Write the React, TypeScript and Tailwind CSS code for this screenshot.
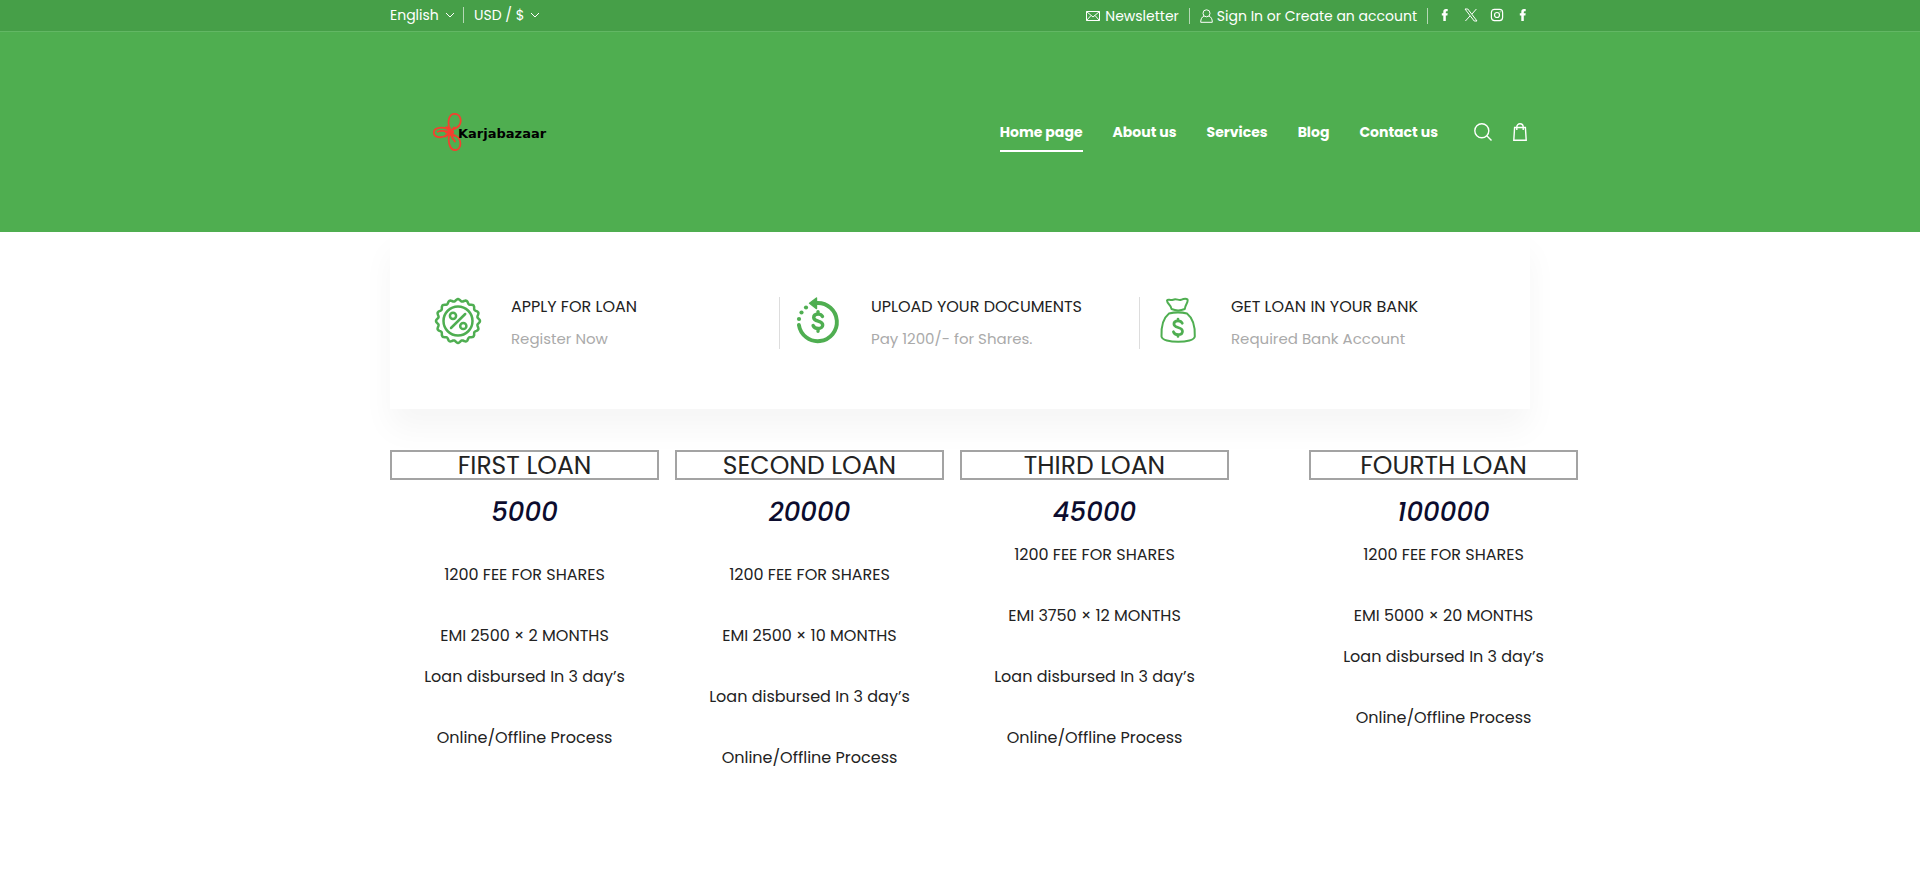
import React from "react";

const socials = ["Facebook", "X", "Instagram", "Facebook page"];

const navLinks = ["Home page", "About us", "Services", "Blog", "Contact us"];

const loans = [
  {
    name: "FIRST LOAN",
    amount: "5000",
    column: "",
    lines: [
      { text: "1200 FEE FOR SHARES", space: "mt-10" },
      { text: "EMI 2500 × 2 MONTHS", space: "mt-10" },
      { text: "Loan disbursed In 3 day’s", space: "mt-5" },
      { text: "Online/Offline Process", space: "mt-10" },
    ],
  },
  {
    name: "SECOND LOAN",
    amount: "20000",
    column: "",
    lines: [
      { text: "1200 FEE FOR SHARES", space: "mt-10" },
      { text: "EMI 2500 × 10 MONTHS", space: "mt-10" },
      { text: "Loan disbursed In 3 day’s", space: "mt-10" },
      { text: "Online/Offline Process", space: "mt-10" },
    ],
  },
  {
    name: "THIRD LOAN",
    amount: "45000",
    column: "",
    lines: [
      { text: "1200 FEE FOR SHARES", space: "mt-5" },
      { text: "EMI 3750 × 12 MONTHS", space: "mt-10" },
      { text: "Loan disbursed In 3 day’s", space: "mt-10" },
      { text: "Online/Offline Process", space: "mt-10" },
    ],
  },
  {
    name: "FOURTH LOAN",
    amount: "100000",
    column: "ml-16",
    lines: [
      { text: "1200 FEE FOR SHARES", space: "mt-5" },
      { text: "EMI 5000 × 20 MONTHS", space: "mt-10" },
      { text: "Loan disbursed In 3 day’s", space: "mt-5" },
      { text: "Online/Offline Process", space: "mt-10" },
    ],
  },
];

function Chevron() {
  return (
    <svg viewBox="0 0 10 6" className="pointer-events-none h-[6px] w-[10px]" fill="none" stroke="currentColor" strokeWidth="1" aria-hidden="true">
      <path d="M1 1l4 4 4-4" />
    </svg>
  );
}

function SocialIcon({ name }: { name: string }) {
  if (name === "X") {
    return (
      <svg viewBox="0 0 14 14" className="h-[14px] w-[14px]" fill="none" stroke="currentColor" aria-hidden="true">
        <path d="M1 1h2.8l9.2 12h-2.8zM12.4 1L7.9 6.1M6 8L1.4 13" />
      </svg>
    );
  }
  if (name === "Instagram") {
    return (
      <svg viewBox="0 0 14 14" className="h-[14px] w-[14px]" fill="none" stroke="currentColor" strokeWidth="1.2" aria-hidden="true">
        <rect x="1.4" y="1.4" width="11.2" height="11.2" rx="3" />
        <circle cx="7" cy="7" r="2.5" />
        <circle cx="10.1" cy="3.9" r=".3" strokeWidth=".6" />
      </svg>
    );
  }
  return (
    <svg viewBox="0 0 14 14" className="h-[14px] w-[14px]" fill="currentColor" aria-hidden="true">
      <path d="M5.3 13V7.6H3.8V5.2h1.5V3.7C5.3 2 6.3 1 7.9 1h1.8v2.2H8.6c-.6 0-.8.3-.8.8v1.2h1.9l-.3 2.400H7.8V13z" />
    </svg>
  );
}

function Flower() {
  return (
    <svg viewBox="0 0 30 40" className="h-10 w-[30px] shrink-0" fill="none" stroke="#f5402f" strokeWidth="1.8" aria-hidden="true">
      <path d="M17.500 17C15.500 10 16.500 1.800 22.500 1.800c6 0 7.500 7 5 11.200-1.600 2.600-4 3.800-8 5" />
      <path d="M17 17.500C11 14.500 1.800 15 1.800 20.500c0 5.500 8.200 6.300 14.700 1.800M5 20c3-1.500 7-1.500 11 0" />
      <path d="M17.500 22c-2 7 0 16 5.500 16 5 0 6.500-6 4.500-10.500-1.300-2.700-4-4.200-8-5.500M19 23c1 3 2.500 5 4.500 7" />
      <path d="M14 14.500l4 5.500 5-5M13 25l5-5 4.500 4.500M13 20h9M17.500 15v9" strokeWidth="2.400" />
    </svg>
  );
}

function PercentBadge() {
  const points = Array.from({ length: 128 }, (_, i) => {
    const a = (i / 128) * Math.PI * 2;
    const r = 20.9 + 1.1 * Math.cos(a * 16);
    return `${24 + r * Math.sin(a)},${24 - r * Math.cos(a)}`;
  }).join(" ");
  return (
    <svg viewBox="0 0 48 48" className="h-12 w-12" fill="none" stroke="#4fae51" strokeWidth="2.500" aria-hidden="true">
      <polygon points={points} strokeLinejoin="round" />
      <circle cx="24" cy="24" r="14.500" />
      <circle cx="19" cy="18.800" r="3.100" />
      <circle cx="29.300" cy="29" r="3.100" />
      <path d="M31.200 17L17 31" strokeLinecap="round" />
    </svg>
  );
}

function DollarCycle() {
  return (
    <svg viewBox="0 0 48 48" className="h-12 w-12" fill="none" stroke="#4fae51" aria-hidden="true">
      <path d="M23 6A19.100 19.100 0 1 1 4.900 28" strokeWidth="3.900" strokeLinecap="round" />
      <path d="M15.500 6.300L22.500 1v10.600z" fill="#4fae51" strokeWidth="1.400" strokeLinejoin="round" />
      <g fill="#4fae51" stroke="none">
        <circle cx="12" cy="10.500" r="2.100" />
        <circle cx="7.500" cy="15.500" r="2.100" />
        <circle cx="5" cy="22" r="2.100" />
      </g>
      <path d="M28.500 19.500c-.8-1.700-2.300-2.400-4.500-2.400-2.600 0-4.300 1.200-4.300 3.300 0 4.900 9 2.500 9 7.500 0 2.200-1.900 3.600-4.600 3.600-2.500 0-4.200-1-5-3M24 14.600v2.500M24 31.500v2.700" strokeWidth="3.400" strokeLinecap="round" />
    </svg>
  );
}

function MoneyBag() {
  return (
    <svg viewBox="0 0 48 48" className="h-12 w-12" fill="none" stroke="#4fae51" strokeWidth="2" strokeLinecap="round" strokeLinejoin="round" aria-hidden="true">
      <path d="M17.500 12c0-4-4.500-5-4.500-8.500 1-2 3 .3 6-.7 3-1.800 5.500.9 8 0 2.500-1.100 5-2 6.500-.3 1 3-2.200 4.500-2.700 9.500-4 1.700-9.300 1.700-13.300 0z" />
      <path d="M15 16.500c6-1.500 12-1.500 18 0 5 4 8.300 12 7.800 23-.7 7-32.600 7-33.300 0C7 28.500 10 20.500 15 16.500z" />
      <path d="M28.300 26.300c-.7-1.800-2.200-2.500-4.300-2.500-2.500 0-4.100 1.200-4.100 3.200 0 4.600 8.600 2.300 8.600 7.200 0 2.200-1.800 3.500-4.400 3.500-2.400 0-4-1-4.700-3M24 22v1.800M24 37.700v1.800" strokeWidth="2.700" />
    </svg>
  );
}

const steps = [
  { title: "APPLY FOR LOAN", note: "Register Now", Icon: PercentBadge, rule: "border-r" },
  { title: "UPLOAD YOUR DOCUMENTS", note: "Pay 1200/- for Shares.", Icon: DollarCycle, rule: "border-r" },
  { title: "GET LOAN IN YOUR BANK", note: "Required Bank Account", Icon: MoneyBag, rule: "" },
];

export default function App() {
  return (
    <div className="min-h-screen overflow-x-hidden bg-white font-['Poppins','Inter',sans-serif] text-[#222]">
      <div className="border-b border-[#62b764] bg-[#469f48] text-white">
        <div className="mx-auto flex h-[31px] max-w-[1140px] items-center justify-between text-sm">
          <div className="flex items-center pb-px">
            <label className="flex items-center">
              <select aria-label="Language" className="w-[55px] appearance-none bg-transparent outline-none">
                <option>English</option>
              </select>
              <Chevron />
            </label>
            <span className="mr-[10px] ml-2 h-4 w-px bg-white/60" />
            <label className="flex items-center">
              <select aria-label="Currency" className="w-[56px] appearance-none bg-transparent outline-none">
                <option>USD / $</option>
              </select>
              <Chevron />
            </label>
          </div>
          <div className="flex items-center">
            <a href="#newsletter" className="flex items-center gap-[5px]">
              <svg viewBox="0 0 14 10" className="h-[10px] w-[14px]" fill="none" stroke="currentColor" aria-hidden="true">
                <path d="M.5.5h13v9H.5zM.5.5L7 6l6.500-5.500M.5 9.500L5 4.500M13.500 9.500L9 4.500" />
              </svg>
              Newsletter
            </a>
            <span className="mx-[10px] h-4 w-px bg-white/60" />
            <a href="#account" className="flex items-center gap-1">
              <svg viewBox="0 0 13 14" className="h-[14px] w-[13px]" fill="none" stroke="currentColor" aria-hidden="true">
                <circle cx="6.500" cy="4.300" r="3.500" />
                <path d="M4 7C1.800 8 .7 10 .7 13.300h11.600C12.300 10 11.200 8 9 7" />
              </svg>
              Sign In or Create an account
            </a>
            <span className="mx-[10px] h-4 w-px bg-white/60" />
            <div className="flex items-center gap-3 pb-0.5">
              {socials.map((name) => (
                <a key={name} href="#social" aria-label={name}>
                  <SocialIcon name={name} />
                </a>
              ))}
            </div>
          </div>
        </div>
      </div>

      <header className="bg-[#4fae50]">
        <div className="mx-auto flex h-[200px] max-w-[1140px] items-center justify-between">
          <a href="#home" className="flex items-center pl-[42px] text-black">
            <Flower />
            <span className="-ml-1 pt-1 font-['DejaVu_Sans',sans-serif] text-[13px] font-bold">Karjabazaar</span>
          </a>
          <div className="flex items-center pr-0.5">
            <nav className="flex items-center gap-[30px] text-sm font-bold text-white">
              {navLinks.map((label, i) => (
                <a key={label} href="#nav" className={i === 0 ? "border-b-2 border-white pt-[9px] pb-2" : "pt-[9px] pb-[10px]"}>
                  {label}
                </a>
              ))}
            </nav>
            <button type="button" aria-label="Search" className="ml-9 text-white">
              <svg viewBox="0 0 18 18" className="h-[18px] w-[18px]" fill="none" stroke="currentColor" strokeWidth="1.400" aria-hidden="true">
                <circle cx="7.800" cy="7.800" r="7" />
                <path d="M12.800 12.800l4.700 4.700" />
              </svg>
            </button>
            <button type="button" aria-label="Cart" className="ml-5 text-white">
              <svg viewBox="0 0 16 18" className="h-[18px] w-4" fill="none" stroke="currentColor" strokeWidth="1.400" aria-hidden="true">
                <path d="M2.600 4.500h10.800l.8 12.700H1.800zM4.800 7V4a3.200 3.200 0 0 1 6.400 0v3" />
              </svg>
            </button>
          </div>
        </div>
      </header>

      <main>
        <section className="mx-auto grid max-w-[1140px] grid-cols-3 bg-white px-[30px] pt-[65px] pb-[60px] shadow-[0_20px_30px_rgba(0,0,0,0.04)]">
          {steps.map(({ title, note, Icon, rule }) => (
            <div key={title} className={`flex h-[52px] gap-[29px] border-[#ddd] pl-[14px] ${rule}`}>
              <Icon />
              <div>
                <h3 className="text-base leading-5">{title}</h3>
                <p className="mt-3 text-[15px] leading-5 text-[#aaa]">{note}</p>
              </div>
            </div>
          ))}
        </section>

        <section className="mx-auto mt-[41px] flex max-w-[1140px] gap-4 text-center">
          {loans.map((loan) => (
            <article key={loan.name} className={`w-[269px] shrink-0 ${loan.column}`}>
              <h2 className="border-2 border-[#a3a3a3] pt-0.5 text-[25px] leading-6">{loan.name}</h2>
              <p className="mt-5 text-[26px] leading-6 font-medium text-[#0c0c2e] italic">{loan.amount}</p>
              <div className="flex flex-col">
                {loan.lines.map((line) => (
                  <p key={line.text} className={`text-base leading-[21px] ${line.space}`}>
                    {line.text}
                  </p>
                ))}
              </div>
            </article>
          ))}
        </section>
      </main>
    </div>
  );
}
